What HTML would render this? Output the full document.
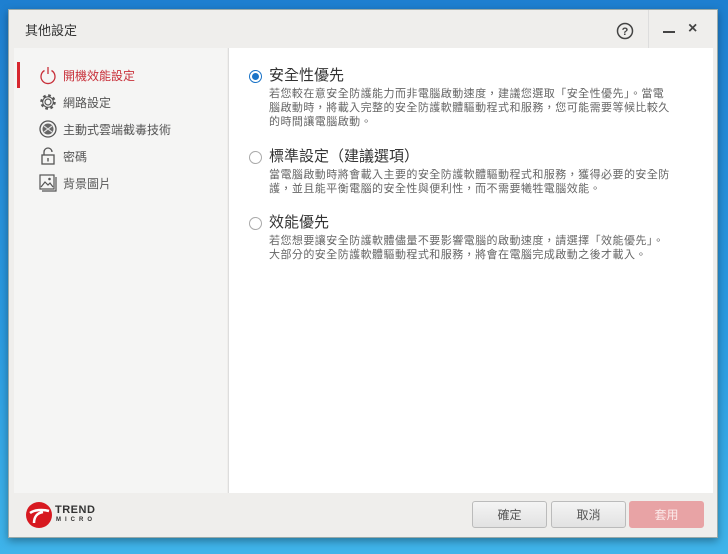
<!DOCTYPE html>
<html><head><meta charset="utf-8"><style>
*{margin:0;padding:0;box-sizing:border-box}
body{width:728px;height:554px;overflow:hidden;background:linear-gradient(180deg,#1e7fd0 0%,#2b9be0 60%,#3fb4ea 100%);font-family:"Liberation Sans","Noto Sans CJK TC",sans-serif;position:relative}
.win{position:absolute;left:8px;top:9px;width:710px;height:529px;background:#efeeec;border:1px solid #9aa;box-shadow:0 3px 8px rgba(0,0,0,.35)}
.title{position:absolute;left:16px;top:10px;font-size:13px;color:#333}
.side{position:absolute;left:5px;top:38px;width:213px;height:445px;background:#f5f5f4}
.main{position:absolute;left:219px;top:38px;width:485px;height:445px;background:#fff;border-left:1px solid #ddd}
.item{position:absolute;left:24px;height:22px;display:flex;align-items:center;font-size:12px;color:#555}
.item svg{width:20px;height:20px;margin-right:5px}
.opt{position:absolute;left:20px}
.opt h3{font-weight:normal;font-size:15px;line-height:20px;color:#333;display:flex;align-items:center}
.rad{width:13px;height:13px;border-radius:50%;border:1px solid #aaa;margin-right:7px;background:#fff;position:relative}
.rad.on{border-color:#1a73c7}
.rad.on:after{content:"";position:absolute;left:2px;top:2px;width:7px;height:7px;border-radius:50%;background:#1a73c7}
.opt p{margin-left:20px;font-size:11px;letter-spacing:0.45px;line-height:14px;color:#666;white-space:nowrap;margin-top:1px}
.btn{position:absolute;top:491px;width:75px;height:27px;border:1px solid #bbb;border-radius:3px;background:linear-gradient(#f4f4f4,#e2e2e2);font-size:12px;color:#555;display:flex;align-items:center;justify-content:center}
</style></head><body>
<div class="win">
<div class="title">其他設定</div>
<svg style="position:absolute;left:607px;top:12px" width="18" height="18" viewBox="0 0 18 18"><circle cx="9" cy="9" r="7.5" fill="none" stroke="#444" stroke-width="1.5"/><text x="9" y="13" font-size="11" text-anchor="middle" fill="#444" font-family="Liberation Sans" font-weight="bold">?</text></svg>
<div style="position:absolute;left:639px;top:0;width:1px;height:38px;background:#ddd"></div>
<div style="position:absolute;left:654px;top:21px;width:12px;height:2px;background:#444"></div>
<div style="position:absolute;left:679px;top:10px;font-size:16px;color:#444;font-weight:bold">×</div>
<div class="side">
<div style="position:absolute;left:3px;top:14px;width:3px;height:26px;background:#d7262e"></div>
<div class="item" style="top:16px;color:#c8303a"><svg viewBox="0 0 20 20"><path d="M6.5 5.5A7 7 0 1 0 13.5 5.5" fill="none" stroke="#c8303a" stroke-width="1.3"/><path d="M10 2v7" stroke="#c8303a" stroke-width="1.3"/></svg>開機效能設定</div>
<div class="item" style="top:43px"><svg viewBox="0 0 20 20"><circle cx="10" cy="10" r="3" fill="none" stroke="#555" stroke-width="1.2"/><circle cx="10" cy="10" r="6.5" fill="none" stroke="#555" stroke-width="2.5" stroke-dasharray="2.6 2.5"/><circle cx="10" cy="10" r="5.3" fill="none" stroke="#555" stroke-width="1"/></svg>網路設定</div>
<div class="item" style="top:70px"><svg viewBox="0 0 20 20"><circle cx="10" cy="10" r="8" fill="none" stroke="#555" stroke-width="1.3"/><circle cx="10" cy="10" r="5.5" fill="#666"/><path d="M6 7l8 6M14 7l-8 6" stroke="#ddd" stroke-width="1.2"/></svg>主動式雲端截毒技術</div>
<div class="item" style="top:97px"><svg viewBox="0 0 20 20"><path d="M6 9V6a4 4 0 0 1 8 0" fill="none" stroke="#555" stroke-width="1.3"/><rect x="4" y="9" width="12" height="9" fill="none" stroke="#555" stroke-width="1.3"/><rect x="9.3" y="12" width="1.4" height="3.5" fill="#555"/></svg>密碼</div>
<div class="item" style="top:124px"><svg viewBox="0 0 20 20"><rect x="2" y="2" width="14" height="14" fill="none" stroke="#555" stroke-width="1.2"/><path d="M4 18h14V4" fill="none" stroke="#555" stroke-width="1.2"/><path d="M3 14l4-5 3 3 2-2 3 4" fill="none" stroke="#555" stroke-width="1.2"/><circle cx="11.5" cy="6" r="1.3" fill="#555"/></svg>背景圖片</div>
</div>
<div class="main">
<div class="opt" style="top:18px"><h3><span class="rad on"></span>安全性優先</h3><p>若您較在意安全防護能力而非電腦啟動速度，建議您選取「安全性優先」。當電<br>腦啟動時，將載入完整的安全防護軟體驅動程式和服務，您可能需要等候比較久<br>的時間讓電腦啟動。</p></div>
<div class="opt" style="top:99px"><h3><span class="rad"></span>標準設定（建議選項）</h3><p>當電腦啟動時將會載入主要的安全防護軟體驅動程式和服務，獲得必要的安全防<br>護，並且能平衡電腦的安全性與便利性，而不需要犧牲電腦效能。</p></div>
<div class="opt" style="top:165px"><h3><span class="rad"></span>效能優先</h3><p>若您想要讓安全防護軟體儘量不要影響電腦的啟動速度，請選擇「效能優先」。<br>大部分的安全防護軟體驅動程式和服務，將會在電腦完成啟動之後才載入。</p></div>
</div>
<svg style="position:absolute;left:16px;top:491px" width="28" height="28" viewBox="0 0 28 28"><circle cx="14" cy="14" r="13" fill="#d71920"/><path d="M5 12c4-3 12-4 19-2M9 22c0-6 3-10 9-11" fill="none" stroke="#fff" stroke-width="2.5"/></svg>
<div style="position:absolute;left:46px;top:494px;font-size:11px;font-weight:bold;color:#333;letter-spacing:.5px">TREND</div>
<div style="position:absolute;left:47px;top:507px;font-size:6px;font-weight:bold;color:#333;letter-spacing:4px">MICRO</div>
<div class="btn" style="left:463px">確定</div>
<div class="btn" style="left:542px">取消</div>
<div class="btn" style="left:620px;background:#e8a3a5;border-color:#e8a3a5;color:#fbe9e9">套用</div>
</div>
</body></html>
